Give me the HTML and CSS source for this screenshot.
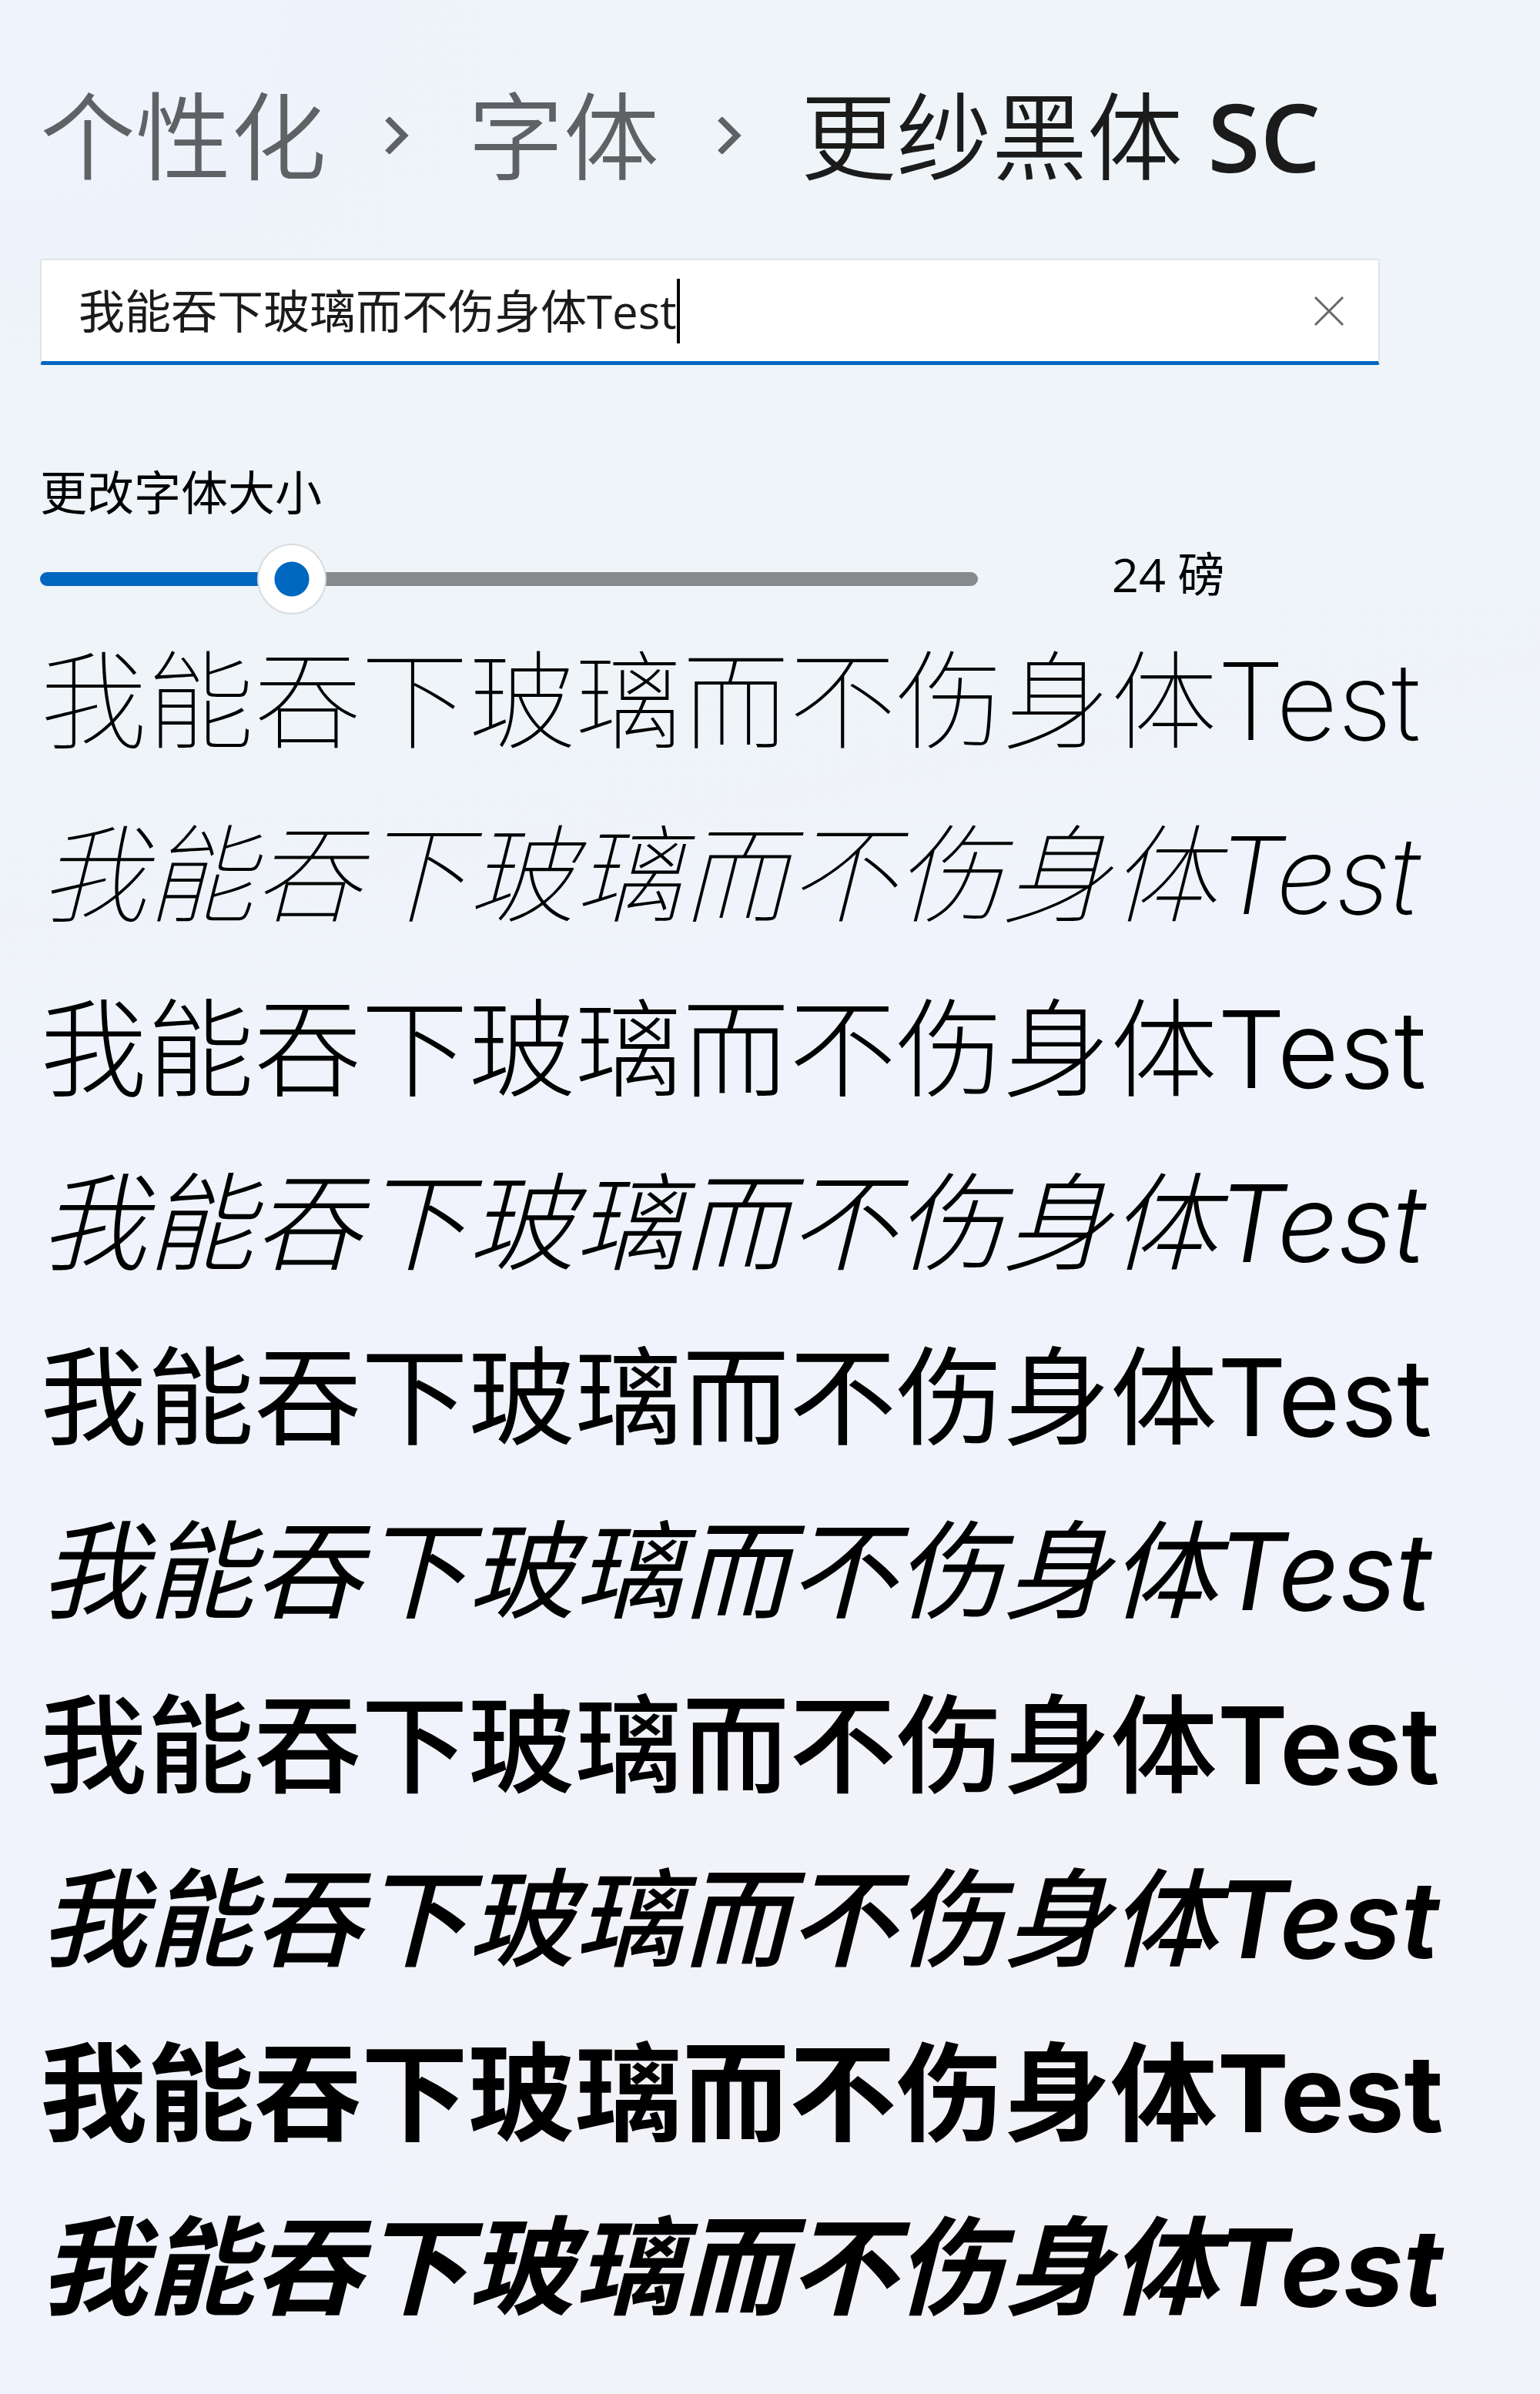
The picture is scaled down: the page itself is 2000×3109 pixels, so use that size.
FILE: index.html
```html
<!DOCTYPE html>
<html lang="zh-CN">
<head>
<meta charset="utf-8">
<meta name="viewport" content="width=device-width, initial-scale=1">
<title>更纱黑体 SC</title>
<link rel="stylesheet" href="styles.css">
</head>
<body>
<main class="page">
  <nav class="breadcrumb" aria-label="位置">
    <a class="crumb" href="#personalization">个性化</a>
    <svg class="chevron" viewBox="0 0 32 48" aria-hidden="true"><path d="M3 2 25 24 3 46"/></svg>
    <a class="crumb" href="#fonts">字体</a>
    <svg class="chevron" viewBox="0 0 32 48" aria-hidden="true"><path d="M3 2 25 24 3 46"/></svg>
    <h1 class="current">更纱黑体 <span class="latin">SC</span></h1>
  </nav>
  <div class="field">
    <input class="field-input" type="text" aria-label="预览文本" value="我能吞下玻璃而不伤身体Test">
    <span class="caret"></span>
    <button class="clear" type="button" aria-label="清除"><svg viewBox="0 0 40 40" aria-hidden="true"><path d="M2 2 38 38M38 2 2 38"/></svg></button>
  </div>
  <label class="size-label" for="size">更改字体大小</label>
  <div class="size-row">
    <input class="slider" id="size" type="range" min="8" max="72" value="24">
    <output class="size-value" for="size">24 磅</output>
  </div>
  <section class="samples">
    <p class="sample extralight">我能吞下玻璃而不伤身体<span>Test</span></p>
    <p class="sample extralight italic">我能吞下玻璃而不伤身体<span>Test</span></p>
    <p class="sample light">我能吞下玻璃而不伤身体<span>Test</span></p>
    <p class="sample light italic">我能吞下玻璃而不伤身体<span>Test</span></p>
    <p class="sample regular">我能吞下玻璃而不伤身体<span>Test</span></p>
    <p class="sample regular italic">我能吞下玻璃而不伤身体<span>Test</span></p>
    <p class="sample semibold">我能吞下玻璃而不伤身体<span>Test</span></p>
    <p class="sample semibold italic">我能吞下玻璃而不伤身体<span>Test</span></p>
    <p class="sample bold">我能吞下玻璃而不伤身体<span>Test</span></p>
    <p class="sample bold italic">我能吞下玻璃而不伤身体<span>Test</span></p>
  </section>
</main>
</body>
</html>
```
FILE: styles.css
```css
* { box-sizing: border-box; }
body {
  margin: 0;
  min-height: 100vh;
  background:
    radial-gradient(ellipse 45% 25% at 68% 88%, #f2f3f8 60%, transparent),
    radial-gradient(ellipse 40% 18% at 0 0, #eef3fc 40%, transparent),
    linear-gradient(170deg, #eef4f8 28%, #f0f3fb 42%);
  color: #000;
  font-family: "Open Sans", "Noto Sans CJK SC", sans-serif;
}
.page { padding: 96px 50px 32px 52px; }
.breadcrumb { display: flex; align-items: center; height: 160px; }
.crumb, .current { margin: 0; font-size: 124px; font-weight: 350; line-height: 160px; white-space: nowrap; }
.crumb { color: #5f6265; text-decoration: none; }
.current { color: #1b1b1b; }
.latin { font-weight: 600; }
.chevron { flex: none; width: 32px; height: 48px; margin: 0 76px; fill: none; stroke: #5f6265; stroke-width: 8; }
.field {
  display: flex; align-items: center;
  width: 92%; max-width: 1740px; height: 138px; margin-top: 80px;
  padding: 0 44px 0 48px;
  background: #fff; border: 2px solid #dfe4e8; border-bottom: 5px solid #0067c0; border-radius: 3px;
}
.field-input { flex: none; field-sizing: content; padding: 0; border: 0; outline: 0; background: none; color: #1b1b1b; font: 400 60px/80px "Open Sans", "Noto Sans CJK SC", sans-serif; }
.caret { width: 4px; height: 84px; background: #000; }
.clear { display: flex; margin-left: auto; padding: 0; border: 0; background: none; }
.clear svg { width: 40px; height: 40px; fill: none; stroke: #666; stroke-width: 3; }
.size-label { display: block; margin-top: 124px; font-size: 61px; font-weight: 400; line-height: 84px; }
.size-row { display: flex; align-items: flex-start; gap: 174px; height: 116px; padding-top: 22px; }
.slider { appearance: none; width: 1218px; height: 96px; margin: 0; background: none; }
.slider::-webkit-slider-runnable-track { height: 18px; border-radius: 9px; background: linear-gradient(90deg, #0067c0 26%, #868a8d 26%); }
.slider::-webkit-slider-thumb { appearance: none; width: 90px; height: 92px; margin-top: -37px; border: 2px solid #d9dcdf; border-radius: 50%; background: radial-gradient(circle, #0067c0 22px, #fff 23px); }
.size-value { font-size: 61px; font-weight: 400; line-height: 84px; }
.sample { margin: 0; font-family: Inter, "Noto Sans CJK SC", sans-serif; font-size: 139px; line-height: 226px; white-space: nowrap; }
.extralight { font-weight: 100; }
.extralight span { font-weight: 200; }
.light { font-weight: 300; }
.regular { font-weight: 400; }
.semibold { font-weight: 500; }
.semibold span { font-weight: 600; }
.bold { font-weight: 700; }
.italic { font-style: italic; }
```
